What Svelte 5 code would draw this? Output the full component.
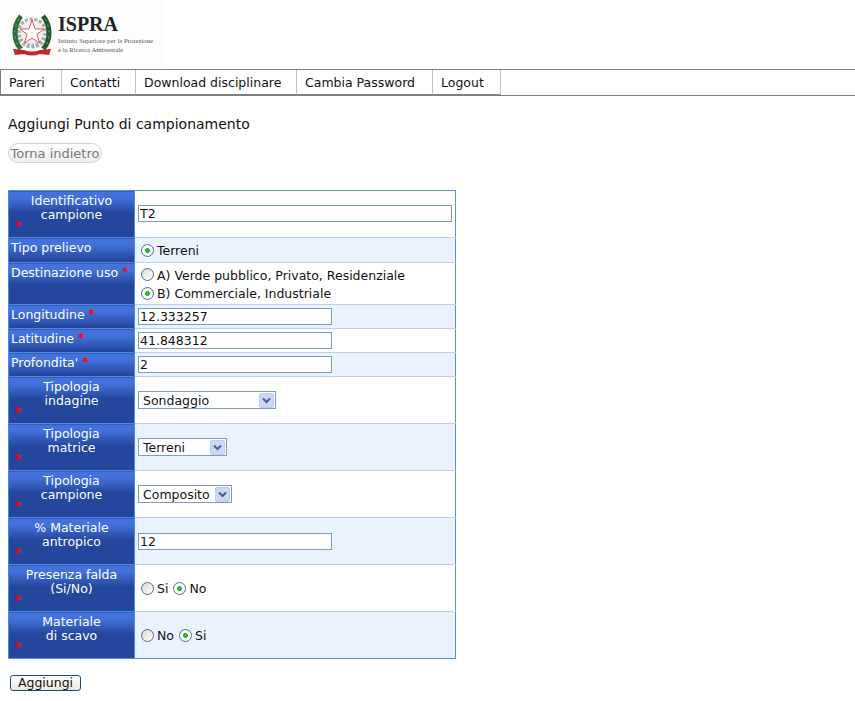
<script>
  const menu = [
    { label: 'Pareri', width: 61 },
    { label: 'Contatti', width: 74 },
    { label: 'Download disciplinare', width: 161 },
    { label: 'Cambia Password', width: 136 },
    { label: 'Logout', width: 69 }
  ];
</script>

{#snippet radio(name, label, checked)}
  <label class="radio"><input type="radio" {name} {checked} /><span>{label}</span></label>
{/snippet}

{#snippet head(lines)}
  <th class="tall">
    {#each lines as line}<div>{line}</div>{/each}
    <div class="req">*</div>
  </th>
{/snippet}

{#snippet select(value, width)}
  <span class="select" style="width: {width}px">
    <select><option>{value}</option></select>
    <svg class="arrow" width="15" height="15" viewBox="0 0 15 15">
      <rect x="0.5" y="0.5" width="14" height="14" rx="1.5" fill="#c9d8f8" stroke="#bccdf0" />
      <path d="M4 5.5 L7.5 9 L11 5.5" fill="none" stroke="#4d6185" stroke-width="2" />
    </svg>
  </span>
{/snippet}

<header class="logo">
  <svg class="emblem" width="44" height="46" viewBox="0 0 44 46">
    <circle cx="22" cy="22" r="13" fill="none" stroke="#a9adb0" stroke-width="5" stroke-dasharray="3 1.5" />
    <circle cx="22" cy="21" r="11.5" fill="#f1eeee" />
    <path d="M11 38 C4 31 2 16 11 5" fill="none" stroke="#2c6a3a" stroke-width="5" />
    <path d="M33 38 C40 31 42 16 33 5" fill="none" stroke="#1f5a30" stroke-width="5" />
    <path d="M11 38 C4 31 2 16 11 5" fill="none" stroke="#7d9f85" stroke-width="1" stroke-dasharray="2 4" />
    <path d="M33 38 C40 31 42 16 33 5" fill="none" stroke="#7d9f85" stroke-width="1" stroke-dasharray="2 4" />
    <path d="M22 9 L25 18 L34 18 L27 23.5 L29.5 32 L22 27 L14.5 32 L17 23.5 L10 18 L19 18Z" fill="#fff" stroke="#d4585e" stroke-width="1" />
    <path d="M3 38 L14 39 Q22 42 30 39 L41 38 L39 44 L30 43 Q22 46 14 43 L5 44Z" fill="#c3262c" />
  </svg>
  <div class="logo-text">
    <div class="ispra">ISPRA</div>
    <div class="istituto">Istituto Superiore per la Protezione</div>
    <div class="istituto">e la Ricerca Ambientale</div>
  </div>
</header>

<nav>
  {#each menu as item}
    <a href="#top" style="width: {item.width}px">{item.label}</a>
  {/each}
</nav>

<main>
  <h1>Aggiungi Punto di campionamento</h1>
  <button class="back">Torna indietro</button>

  <table>
    <tbody>
      <tr class="h47">
        {@render head(['Identificativo', 'campione'])}
        <td><input class="wide first" value="T2" /></td>
      </tr>
      <tr class="alt h25">
        <th>Tipo prelievo</th>
        <td>{@render radio('tipo', 'Terreni', true)}</td>
      </tr>
      <tr class="h42">
        <th>Destinazione uso <span class="star">*</span></th>
        <td>
          <div>{@render radio('uso', 'A) Verde pubblico, Privato, Residenziale', false)}</div>
          <div>{@render radio('uso', 'B) Commerciale, Industriale', true)}</div>
        </td>
      </tr>
      <tr class="alt h24">
        <th>Longitudine <span class="star">*</span></th>
        <td><input value="12.333257" /></td>
      </tr>
      <tr class="h24">
        <th>Latitudine <span class="star">*</span></th>
        <td><input value="41.848312" /></td>
      </tr>
      <tr class="alt h24">
        <th>Profondita' <span class="star">*</span></th>
        <td><input value="2" /></td>
      </tr>
      <tr class="h47">
        {@render head(['Tipologia', 'indagine'])}
        <td>{@render select('Sondaggio', 138)}</td>
      </tr>
      <tr class="alt h47">
        {@render head(['Tipologia', 'matrice'])}
        <td>{@render select('Terreni', 89)}</td>
      </tr>
      <tr class="h47">
        {@render head(['Tipologia', 'campione'])}
        <td>{@render select('Composito', 94)}</td>
      </tr>
      <tr class="alt h47">
        {@render head(['% Materiale', 'antropico'])}
        <td><input value="12" /></td>
      </tr>
      <tr class="h47">
        {@render head(['Presenza falda', '(Si/No)'])}
        <td>
          {@render radio('falda', 'Si', false)}
          {@render radio('falda', 'No', true)}
        </td>
      </tr>
      <tr class="alt h47">
        {@render head(['Materiale', 'di scavo'])}
        <td>
          {@render radio('scavo', 'No', false)}
          {@render radio('scavo', 'Si', true)}
        </td>
      </tr>
    </tbody>
  </table>

  <button class="submit">Aggiungi</button>
</main>

<style>
  :global(body) {
    background: #fff;
    color: #111;
    font-family: "DejaVu Sans", Verdana, sans-serif;
    font-size: 12.5px;
  }

  .logo {
    display: flex;
    width: 163px;
    height: 69px;
    box-sizing: border-box;
    padding: 11px 0 0 10px;
    gap: 4px;
    background: #fdfdfd;
  }
  .emblem {
    flex: none;
  }
  .logo-text {
    font-family: "Liberation Serif", serif;
    color: #555;
  }
  .ispra {
    font-size: 20px;
    font-weight: bold;
    line-height: 23px;
    margin-top: 2px;
    color: #222;
  }
  .istituto {
    font-size: 6.8px;
    line-height: 9px;
    white-space: nowrap;
  }

  nav {
    display: flex;
    height: 25px;
    border-top: 1px solid #808080;
    border-bottom: 1px solid #808080;
  }
  nav a {
    display: block;
    box-sizing: border-box;
    padding: 5px 0 0 8px;
    border-left: 1px solid #c4c4c4;
    border-bottom: 1px solid #808080;
    color: #111;
    text-decoration: none;
    line-height: 16px;
  }
  nav a:first-child {
    border-left-color: #808080;
  }
  nav a:last-child {
    border-right: 1px solid #c4c4c4;
  }

  main {
    padding: 0 8px;
  }
  h1 {
    margin: 20px 0 0;
    font-size: 14px;
    font-weight: normal;
    line-height: 16px;
  }
  button {
    font-family: inherit;
    display: block;
  }
  .back {
    margin-top: 11px;
    width: 94px;
    height: 20px;
    padding: 0;
    font-size: 13px;
    border: 1px solid #d4d4d4;
    border-radius: 10px;
    background: linear-gradient(#fff, #efefef);
    color: #777;
  }

  table {
    width: 448px;
    margin-top: 27px;
    border-collapse: collapse;
  }
  th {
    width: 126px;
    box-sizing: border-box;
    padding: 3px 2px 0;
    vertical-align: top;
    text-align: left;
    font-weight: normal;
    color: #fff;
    line-height: 14px;
    background: linear-gradient(#4372dc 0, #4372dc 6px, #24469c 22px);
    border: 1px solid #4a8ade;
  }
  th.tall {
    text-align: center;
  }
  td {
    padding: 0 3px;
    border-top: 1px solid #b9d1ec;
    border-bottom: 1px solid #b9d1ec;
    border-left: 1px solid #4a8ade;
    border-right: 1px solid #5a8fd3;
    background: #fff;
    line-height: 18px;
  }
  tr:first-child td,
  tr:first-child th {
    border-top-color: #5a8fd3;
  }
  tr:last-child td,
  tr:last-child th {
    border-bottom-color: #5a8fd3;
  }
  .alt td {
    background: #eaf3fd;
  }
  .h47 {
    height: 47px;
  }
  .h42 {
    height: 42px;
  }
  .h25 {
    height: 25px;
  }
  .h24 {
    height: 24px;
  }
  .req {
    text-align: left;
    padding-left: 4px;
    margin-top: -3px;
    line-height: 14px;
    color: #f00;
    font-weight: bold;
  }
  .star {
    color: #f00;
    font-weight: bold;
    position: relative;
    top: -1px;
  }

  input:not([type]) {
    display: block;
    box-sizing: border-box;
    width: 194px;
    height: 17px;
    padding: 0 1px;
    border: 1px solid #7f9db9;
    font-family: inherit;
    font-size: 12.5px;
    color: #111;
    background: #fff;
  }
  input.wide {
    width: 314px;
  }
  input.first {
    margin-bottom: 2px;
  }

  .radio {
    display: inline-flex;
    align-items: center;
    gap: 3px;
    margin-left: 3px;
    vertical-align: middle;
  }
  .radio + .radio {
    margin-left: 1px;
  }
  .radio span {
    padding-top: 2px;
    line-height: 16px;
  }
  .radio input {
    appearance: none;
    width: 13px;
    height: 13px;
    margin: 0;
    border: 1px solid #4f6f92;
    border-radius: 50%;
    background: linear-gradient(135deg, #d8d8d0, #fff);
  }
  .radio input:checked {
    background: radial-gradient(circle, #3fbf4a 0, #2aa838 27%, #fff 36%, #fff 60%, #dcdcd4 100%);
  }

  .select {
    display: block;
    position: relative;
    height: 18px;
  }
  .select select {
    appearance: none;
    display: block;
    width: 100%;
    height: 18px;
    padding: 0 0 0 4px;
    border: 1px solid #7f9db9;
    border-radius: 0;
    background: #fff;
    font-family: inherit;
    font-size: 12.5px;
    color: #111;
  }
  .arrow {
    position: absolute;
    top: 2px;
    right: 2px;
  }

  .submit {
    margin: 16px 0 0 2px;
    width: 71px;
    height: 16px;
    padding: 0;
    font-size: 12.5px;
    line-height: 12px;
    border: 1px solid #1c4a7e;
    border-radius: 3px;
    background: linear-gradient(#fff, #ece9d8);
    color: #111;
  }
</style>
